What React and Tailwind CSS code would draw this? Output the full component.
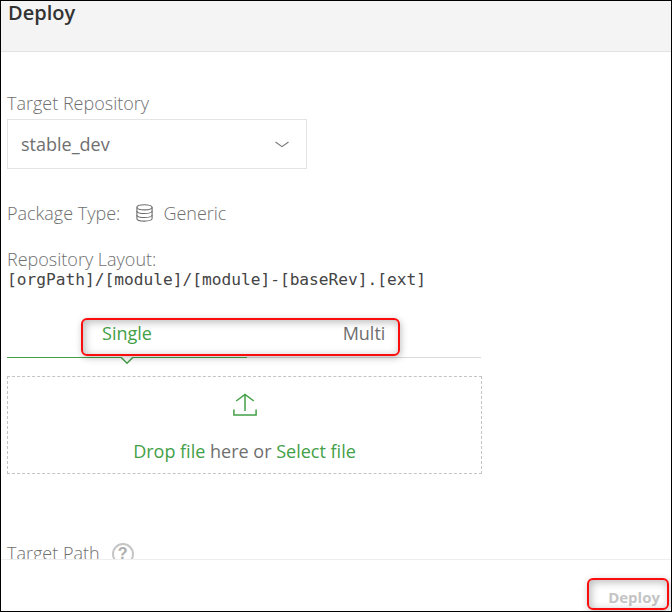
function DatabaseIcon() {
  return (
    <svg className="ml-[16px] mr-[10px] h-[18px] w-[17px] shrink-0" viewBox="0 0 17 18" fill="none" stroke="#6f6f6f" strokeWidth="1.1">
      <ellipse cx="8.5" cy="3.3" rx="7.6" ry="2.6" />
      <path d="M.9 3.3v3.6c0 1.5 3.4 2.6 7.6 2.6s7.6-1.1 7.6-2.6V3.3" />
      <path d="M.9 7v3.9c0 1.5 3.4 2.6 7.6 2.6s7.6-1.1 7.6-2.6V7" />
      <path d="M.9 11v3.4c0 1.6 3.4 2.7 7.6 2.7s7.6-1.1 7.6-2.7V11" />
    </svg>
  );
}

function UploadIcon() {
  return (
    <svg className="h-[24px] w-[24px]" viewBox="0 0 24 24" fill="none" stroke="#43a047" strokeWidth="1.5">
      <path d="M12 18V1.5M3.2 8 12 1.5 20.8 8" />
      <path d="M.9 16.5v5.6h22.2v-5.6" />
    </svg>
  );
}

const highlight =
  "pointer-events-none absolute rounded-[6px] border-2 border-[#fb0d0d] shadow-[1px_2px_7px_rgba(0,0,0,0.25),inset_2px_2px_8px_rgba(0,0,0,0.28)]";

export default function App() {
  return (
    <div className="relative flex h-[612px] w-[672px] flex-col overflow-hidden border border-black bg-white font-['Open_Sans',sans-serif] text-[#6f6f6f]">
      <header className="h-[51px] shrink-0 border-b border-[#e2e2e2] bg-[#f4f4f4] pl-[7px]">
        <h1 className="h-[24px] text-[20px] leading-[24px] font-semibold text-[#333]">Deploy</h1>
      </header>
      <main className="flex h-[507px] shrink-0 flex-col overflow-hidden pl-[6px] text-[18px] whitespace-nowrap">
        <div className="mt-[38px] h-[29px] shrink-0 leading-[27px] font-light">Target Repository</div>
        <div className="flex h-[50px] w-[300px] shrink-0 items-center justify-between border border-[#e4e4e4] pr-[17px] pl-[13px]">
          <span>stable_dev</span>
          <svg className="h-[7px] w-[14px]" viewBox="0 0 14 7" fill="none" stroke="#777" strokeWidth="1.1">
            <path d="M.5 1 7 5.6 13.5 1" />
          </svg>
        </div>
        <div className="mt-[30px] flex h-[28px] shrink-0 items-center font-light">
          <span>Package Type:</span>
          <DatabaseIcon />
          <span>Generic</span>
        </div>
        <div className="mt-[18px] h-[26px] shrink-0 leading-[28px] font-light">Repository Layout:</div>
        <div className="h-[20px] shrink-0 font-['DejaVu_Sans_Mono',monospace] text-[16.2px] leading-[18px] text-[#444]">
          [orgPath]/[module]/[module]-[baseRev].[ext]
        </div>
        <div className="mt-[26px] flex h-[41px] w-[474px] shrink-0 text-center leading-[32px]">
          <div className="relative w-[240px] border-b border-[#43a047] text-[#43a047]">
            Single
            <svg className="absolute top-[40px] left-[113px] h-[8px] w-[14px]" viewBox="0 0 14 8">
              <path d="M1 0h12L7 6.3Z" fill="#fff" />
              <path d="M1 .3 7 6.3 13 .3" fill="none" stroke="#43a047" strokeWidth="1.5" />
            </svg>
          </div>
          <div className="w-[234px] border-b border-[#d9d9d9]">Multi</div>
        </div>
        <div className="mt-[18px] flex h-[98px] w-[475px] shrink-0 flex-col items-center border border-dashed border-[#c4c4c4] pt-[16px]">
          <UploadIcon />
          <div className="mt-[20px] leading-[28px]">
            <span className="text-[#43a047]">Drop file</span> here or <span className="text-[#43a047]">Select file</span>
          </div>
        </div>
        <div className="mt-[66px] flex h-[27px] shrink-0 items-center font-light">
          <span>Target Path</span>
          <span className="ml-[12px] flex h-[22px] w-[22px] items-center justify-center rounded-full border-2 border-[#c6c6c6] font-['Liberation_Sans',sans-serif] text-[16px] leading-none font-bold text-[#adadad]">?</span>
        </div>
      </main>
      <footer className="flex grow justify-end border-t border-[#eee] pr-[11px]">
        <button className="mt-[26px] h-[22px] text-[15px] leading-[22px] font-bold text-[#c4c4c4]">Deploy</button>
      </footer>
      <div className={`${highlight} top-[317px] left-[80px] h-[38px] w-[319px]`} />
      <div className={`${highlight} top-[577px] left-[586px] h-[32px] w-[82px]`} />
    </div>
  );
}
